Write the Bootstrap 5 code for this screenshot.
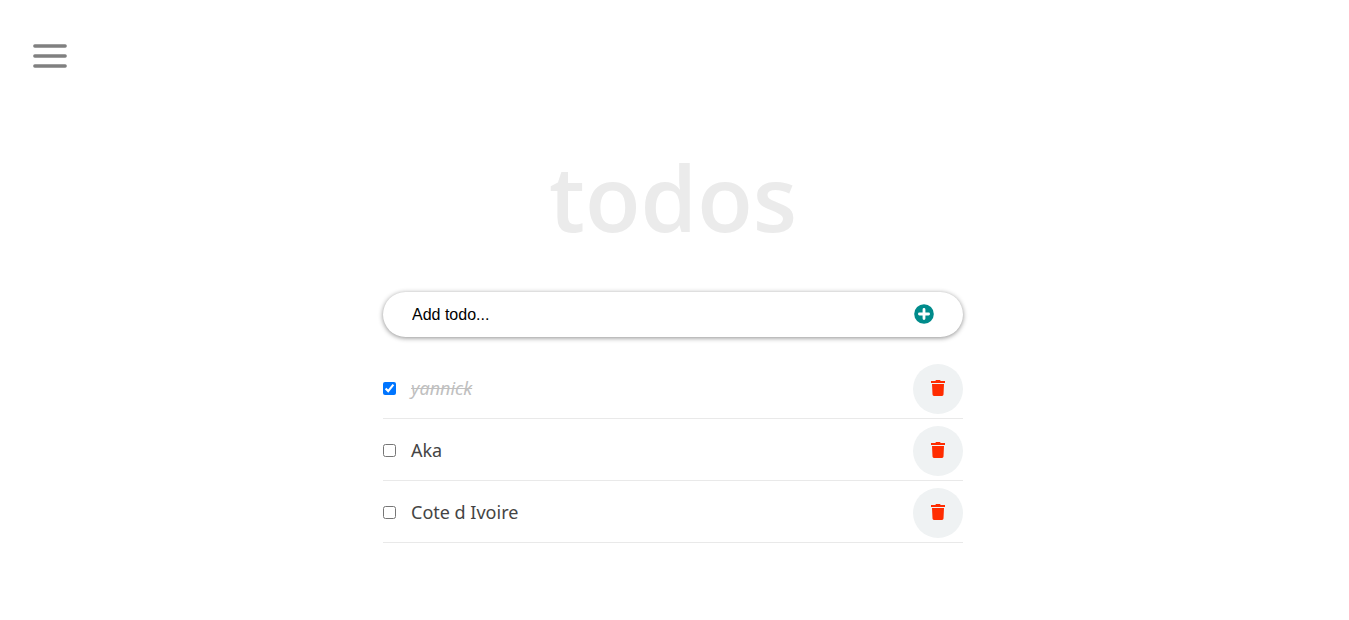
<!DOCTYPE html>
<html lang="en">
<head>
<meta charset="utf-8">
<meta name="viewport" content="width=device-width, initial-scale=1">
<title>todos</title>
<link rel="stylesheet" href="https://cdn.jsdelivr.net/npm/bootstrap@5.3.0/dist/css/bootstrap.min.css">
<style>
  body { font-family: "Open Sans", sans-serif; color: #444; background: #fff; }
  .menu-btn { margin: 36px 0 0 30px; color: #808080; line-height: 0; }
  .todo-app { max-width: 583px; padding-right: 3px; }
  .todo-title { font-size: 91px; font-weight: 600; line-height: 110px; color: #ebebeb; margin: 66px 0 40px; }
  .todo-form { height: 45px; padding: 0 29px; background: #fff; box-shadow: 0 1px 5px rgba(0, 0, 0, .45); margin-bottom: 20px; }
  .todo-input { min-width: 0; font: 16px "Liberation Sans", Arial, sans-serif; color: #000; outline: 0; }
  .todo-input::placeholder { color: #000; opacity: 1; }
  .add-btn { color: darkcyan; line-height: 0; padding: 0 0 2px; }
  .todo-item { gap: 15px; padding: 7px 0 4px; border-bottom: 1px solid #e9e9e9; }
  .todo-item input { width: 13px; height: 13px; margin: 0 0 2px; accent-color: #0075ff; }
  .todo-label { font-family: "Noto Sans", sans-serif; font-size: 18px; line-height: 24px; padding-bottom: 2px; }
  .todo-item input:checked + .todo-label { font-style: italic; text-decoration: line-through; color: #c0c0c0; }
  .del-btn { width: 50px; height: 50px; background: #eff2f3; color: #ff2c00; padding: 0 0 3px; }
</style>
</head>
<body>
<svg class="d-none" aria-hidden="true">
  <symbol id="trash" viewBox="0 0 14 16">
    <path d="M0 1h4.3L5 0h4l.7 1H14v2H0zM1 4h12l-.5 10.6a1.5 1.5 0 0 1-1.5 1.4H3a1.5 1.5 0 0 1-1.5-1.4z" fill="currentColor"/>
  </symbol>
</svg>
<nav>
  <button type="button" class="menu-btn btn border-0 p-0" aria-label="Menu">
    <svg width="40" height="40" viewBox="0 0 40 40" fill="none" stroke="currentColor" stroke-width="3.3" stroke-linecap="round"><path d="M4.8 10h30.4M4.8 20h30.4M4.8 30h30.4"/></svg>
  </button>
</nav>
<main class="todo-app mx-auto">
  <h1 class="todo-title text-center">todos</h1>
  <form class="todo-form rounded-pill d-flex align-items-center">
    <input type="text" class="todo-input flex-grow-1 border-0 p-0 bg-transparent" placeholder="Add todo..." aria-label="Add todo">
    <button type="button" class="add-btn btn border-0" aria-label="Add">
      <svg width="20" height="20" viewBox="0 0 20 20"><circle cx="10" cy="10" r="9.8" fill="currentColor"/><path d="M10 5.4v9.2M5.4 10h9.2" stroke="#fff" stroke-width="2.8" stroke-linecap="round"/></svg>
    </button>
  </form>
  <ul class="list-unstyled mb-0">
    <li class="todo-item d-flex align-items-center">
      <input type="checkbox" id="t1" checked><label class="todo-label flex-grow-1" for="t1">yannick</label>
      <button type="button" class="del-btn btn border-0 rounded-circle d-flex align-items-center justify-content-center" aria-label="Delete yannick"><svg width="14" height="16"><use href="#trash"/></svg></button>
    </li>
    <li class="todo-item d-flex align-items-center">
      <input type="checkbox" id="t2"><label class="todo-label flex-grow-1" for="t2">Aka</label>
      <button type="button" class="del-btn btn border-0 rounded-circle d-flex align-items-center justify-content-center" aria-label="Delete Aka"><svg width="14" height="16"><use href="#trash"/></svg></button>
    </li>
    <li class="todo-item d-flex align-items-center">
      <input type="checkbox" id="t3"><label class="todo-label flex-grow-1" for="t3">Cote d Ivoire</label>
      <button type="button" class="del-btn btn border-0 rounded-circle d-flex align-items-center justify-content-center" aria-label="Delete Cote d Ivoire"><svg width="14" height="16"><use href="#trash"/></svg></button>
    </li>
  </ul>
</main>
<script src="https://cdn.jsdelivr.net/npm/bootstrap@5.3.0/dist/js/bootstrap.bundle.min.js"></script>
</body>
</html>
